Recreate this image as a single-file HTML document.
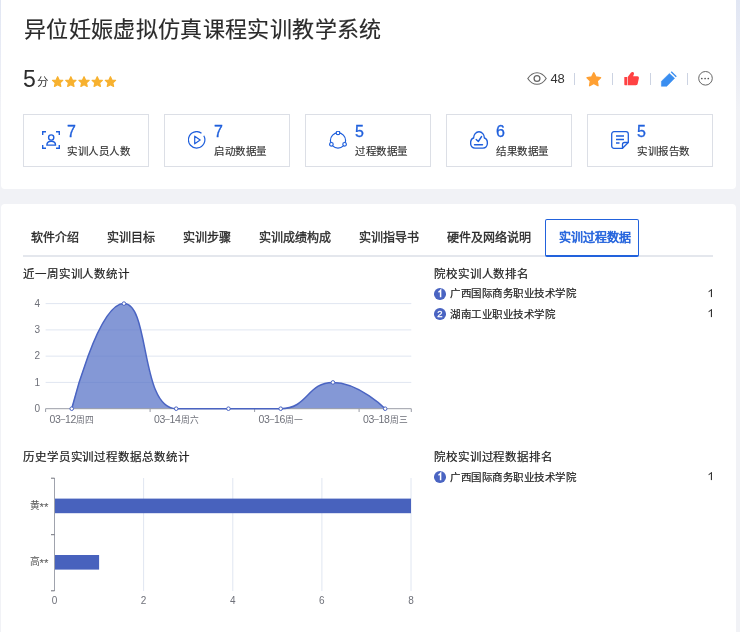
<!DOCTYPE html>
<html lang="zh-CN">
<head>
<meta charset="utf-8">
<style>
*{box-sizing:border-box;margin:0;padding:0}
html,body{width:740px;height:632px;overflow:hidden}
body{background:linear-gradient(#e1e6f3 0px,#e8ebf5 50px,#f1f2f6 110px) #f1f2f6 no-repeat;position:relative;font-family:"Liberation Sans",sans-serif;color:#333}
.a{position:absolute;white-space:nowrap;line-height:1}
.card{position:absolute;background:#fff;border-radius:4px}
.box{position:absolute;top:114px;width:126px;height:53px;border:1px solid #dcdfe6}
.num{position:absolute;font-size:16px;color:#1f5fdc;-webkit-text-stroke:0.3px #1f5fdc;line-height:1}
.lbl{position:absolute;font-size:10.5px;letter-spacing:0.5px;color:#333;-webkit-text-stroke:0.15px #333;line-height:1}
.tab{position:absolute;font-size:12px;color:#333;-webkit-text-stroke:0.35px #2a2a2a;color:#2a2a2a;line-height:1;top:232px}
.sep{position:absolute;top:73px;width:1px;height:12px;background:#ccd3e2}
.rk{position:absolute;font-size:10.5px;letter-spacing:0.5px;color:#222;-webkit-text-stroke:0.2px #222;line-height:1}
.badge{position:absolute;width:11.7px;height:11.7px;border-radius:50%;background:#4a64c2;color:#fff;font-size:9.5px;text-align:center;line-height:11.7px;-webkit-text-stroke:0.3px #fff}
.val{position:absolute;font-size:10.5px;color:#222;line-height:1;right:27px}
.ctitle{position:absolute;font-size:11.5px;color:#222;-webkit-text-stroke:0.2px #222;letter-spacing:0.9px;line-height:1}
</style>
</head>
<body>
<div id="w" style="position:absolute;left:0;top:0;width:740px;height:632px;will-change:transform">
<div class="card" style="left:1px;top:-10px;width:735px;height:199px"></div>
<div class="card" style="left:1px;top:204px;width:735px;height:440px"></div>

<div class="a" style="left:24px;top:19px;font-size:22px;letter-spacing:0.35px;color:#2b2b2b;-webkit-text-stroke:0.15px #2b2b2b">异位妊娠虚拟仿真课程实训教学系统</div>

<div class="a" style="left:23px;top:67.5px;font-size:23px;color:#2b2b2b">5</div>
<div class="a" style="left:37px;top:76.5px;font-size:11.5px;color:#333">分</div>
<svg class="a" style="left:51px;top:75px" width="68" height="14" viewBox="0 0 68 14">
  <g fill="#f7b12f" stroke="#f7b12f" stroke-width="1.2" stroke-linejoin="round">
    <path id="st" d="M6.64,1.70 L8.14,5.04 L11.78,5.43 L9.07,7.89 L9.81,11.47 L6.64,9.65 L3.47,11.47 L4.21,7.89 L1.50,5.43 L5.14,5.04 Z"/>
    <use href="#st" x="13.2"/><use href="#st" x="26.4"/><use href="#st" x="39.6"/><use href="#st" x="52.8"/>
  </g>
</svg>

<!-- top right actions -->
<svg class="a" style="left:526px;top:71px" width="22" height="15" viewBox="0 0 22 15">
  <path d="M1.8,7.5 C4.5,3.3 7.6,1.7 11,1.7 C14.4,1.7 17.5,3.3 20.2,7.5 C17.5,11.7 14.4,13.3 11,13.3 C7.6,13.3 4.5,11.7 1.8,7.5 Z" fill="none" stroke="#666" stroke-width="1.1"/>
  <circle cx="11" cy="7.5" r="2.9" fill="none" stroke="#666" stroke-width="1.3"/>
</svg>
<div class="a" style="left:550.6px;top:72px;font-size:13px;letter-spacing:-0.4px;color:#333">48</div>
<div class="sep" style="left:574px"></div>
<svg class="a" style="left:585px;top:70.5px" width="18" height="17" viewBox="0 0 18 17">
  <path d="M8.80,1.90 L10.86,6.07 L15.46,6.74 L12.13,9.98 L12.91,14.56 L8.80,12.40 L4.69,14.56 L5.47,9.98 L2.14,6.74 L6.74,6.07 Z" fill="#ffa033" stroke="#ffa033" stroke-width="1.6" stroke-linejoin="round"/>
</svg>
<div class="sep" style="left:612px"></div>
<svg class="a" style="left:624px;top:71px" width="16" height="16" viewBox="0 0 16 16">
  <path d="M0.3,6 H3.1 V14.2 H1.3 C0.7,14.2 0.3,13.8 0.3,13.2 Z" fill="#ff4243"/>
  <path d="M3.7,6 L6.9,1.8 C7.4,1.0 8.3,0.7 9.1,1.1 C9.9,1.5 10.2,2.4 9.9,3.2 L9.1,5.3 H13.4 C14.5,5.3 15.1,6.2 14.9,7.3 L13.6,13 C13.4,13.8 12.7,14.2 11.9,14.2 H3.7 Z" fill="#ff4243"/>
</svg>
<div class="sep" style="left:650px"></div>
<svg class="a" style="left:660px;top:71px" width="18" height="17" viewBox="0 0 18 17">
  <path d="M9.4,2.4 L14.6,7.3 L6.8,15.3 L1.4,15.3 L1.4,10.3 Z" fill="#3a8ef0" stroke="#3a8ef0" stroke-width="0.5" stroke-linejoin="round"/>
  <path d="M11.2,0.7 L16.3,5.8" stroke="#3a8ef0" stroke-width="1.3"/>
</svg>
<div class="sep" style="left:687px"></div>
<svg class="a" style="left:697px;top:70px" width="17" height="17" viewBox="0 0 17 17">
  <circle cx="8.5" cy="8.3" r="6.8" fill="none" stroke="#666" stroke-width="1"/>
  <circle cx="4.8" cy="8.5" r="0.85" fill="#555"/><circle cx="8.1" cy="8.5" r="0.85" fill="#555"/><circle cx="11.3" cy="8.5" r="0.85" fill="#555"/>
</svg>

<!-- stat boxes -->
<div class="box" style="left:23px"></div>
<div class="box" style="left:164px"></div>
<div class="box" style="left:305px"></div>
<div class="box" style="left:446px"></div>
<div class="box" style="left:587px"></div>

<svg class="a" style="left:42px;top:131px" width="18" height="18" viewBox="0 0 18 18" fill="none" stroke="#1f5fdc" stroke-width="1.4">
  <path d="M0.7,4 V0.7 H4 M14,0.7 H17.3 V4 M17.3,14 V17.3 H14 M4,17.3 H0.7 V14"/>
  <circle cx="9.2" cy="6.5" r="2.6"/>
  <path d="M4.9,14.1 C4.9,11.5 6.7,10.2 9.2,10.2 C11.7,10.2 13.5,11.5 13.5,14.1 Z"/>
</svg>
<div class="num" style="left:67px;top:124px">7</div>
<div class="lbl" style="left:67px;top:146.4px">实训人员人数</div>

<svg class="a" style="left:188px;top:131px" width="18" height="18" viewBox="0 0 18 18" fill="none" stroke="#1f5fdc" stroke-width="1.2">
  <path d="M13.5,2.2 A8.2,8.2 0 1 0 15.8,4.8"/>
  <path d="M6.7,5.2 L12.2,9 L6.7,12.8 Z" stroke-linejoin="round"/>
</svg>
<div class="num" style="left:214px;top:124px">7</div>
<div class="lbl" style="left:214px;top:146.4px">启动数据量</div>

<svg class="a" style="left:329px;top:131px" width="18" height="18" viewBox="0 0 18 18" fill="none" stroke="#1f5fdc" stroke-width="1.2">
  <circle cx="9" cy="9.5" r="7.6"/>
  <g fill="#fff"><circle cx="9" cy="1.9" r="1.8"/><circle cx="2.4" cy="13.3" r="1.8"/><circle cx="15.6" cy="13.3" r="1.8"/></g>
</svg>
<div class="num" style="left:355px;top:124px">5</div>
<div class="lbl" style="left:355px;top:146.4px">过程数据量</div>

<svg class="a" style="left:470px;top:131px" width="19" height="18" viewBox="0 0 19 18" fill="none" stroke="#1f5fdc" stroke-width="1.4" stroke-linecap="round" stroke-linejoin="round">
  <path d="M3.6,7 C3.6,3.5 6,0.8 9,0.8 C12,0.8 14.4,3.5 14.4,7 C16.3,7.5 17.4,9.5 17.4,12 C17.4,15 15.5,17.1 13,17.1 H5 C2.5,17.1 0.6,15 0.6,12 C0.6,9.5 1.7,7.5 3.6,7 Z"/>
  <path d="M6.2,8.4 L8.3,10.5 L11.6,5.5"/>
  <path d="M4.5,13.7 H12.5"/>
</svg>
<div class="num" style="left:496px;top:124px">6</div>
<div class="lbl" style="left:496px;top:146.4px">结果数据量</div>

<svg class="a" style="left:611px;top:131px" width="18" height="18" viewBox="0 0 18 18" fill="none" stroke="#1f5fdc" stroke-width="1.3">
  <path d="M11.5,17.3 H3 C1.7,17.3 0.7,16.3 0.7,15 V3 C0.7,1.7 1.7,0.7 3,0.7 H15 C16.3,0.7 17.3,1.7 17.3,3 V11.5 Z"/>
  <path d="M11.5,17.3 V13.5 C11.5,12.3 12.3,11.5 13.5,11.5 H17.3"/>
  <path d="M5,5 H13 M5,8.5 H13 M5,12 H8.5"/>
</svg>
<div class="num" style="left:637px;top:124px">5</div>
<div class="lbl" style="left:637px;top:146.4px">实训报告数</div>

<!-- tabs -->
<div style="position:absolute;left:23px;top:255px;width:690px;height:2px;background:#e4e7ed"></div>
<div class="tab" style="left:31px">软件介绍</div>
<div class="tab" style="left:107px">实训目标</div>
<div class="tab" style="left:183px">实训步骤</div>
<div class="tab" style="left:259px">实训成绩构成</div>
<div class="tab" style="left:359px">实训指导书</div>
<div class="tab" style="left:447px">硬件及网络说明</div>
<div style="position:absolute;left:545.2px;top:219px;width:93.6px;height:37.5px;border:1.7px solid #2262dc;border-bottom-width:2.4px;border-radius:2px;background:#fff"></div>
<div class="tab" style="left:559px;color:#2262dc;-webkit-text-stroke:0.6px #2262dc">实训过程数据</div>

<!-- chart titles -->
<div class="ctitle" style="left:23px;top:269.2px">近一周实训人数统计</div>
<div class="ctitle" style="left:23px;top:451.5px">历史学员实训过程数据总数统计</div>
<div class="ctitle" style="left:434px;top:269.2px">院校实训人数排名</div>
<div class="ctitle" style="left:434px;top:451.5px">院校实训过程数据排名</div>

<!-- rankings -->
<div class="badge" style="left:434px;top:288px"></div><svg class="a" style="left:434px;top:288px" width="12" height="12" viewBox="0 0 12 12"><path d="M4.4,4 C5.4,3.7 6.1,3.1 6.6,2.4 V9.3" fill="none" stroke="#fff" stroke-width="1.5"/></svg>
<div class="rk" style="left:450px;top:288px">广西国际商务职业技术学院</div>
<svg class="a" style="left:707px;top:289px" width="7" height="10" viewBox="0 0 7 10"><path d="M1.6,2.6 C2.8,2.2 3.8,1.5 4.4,0.4 V8.1" fill="none" stroke="#1a1a1a" stroke-width="1"/></svg>
<div class="badge" style="left:434px;top:308.2px">2</div>
<div class="rk" style="left:450px;top:309px">湖南工业职业技术学院</div>
<svg class="a" style="left:707px;top:309px" width="7" height="10" viewBox="0 0 7 10"><path d="M1.6,2.6 C2.8,2.2 3.8,1.5 4.4,0.4 V8.1" fill="none" stroke="#1a1a1a" stroke-width="1"/></svg>
<div class="badge" style="left:434px;top:471.3px"></div><svg class="a" style="left:434px;top:471.3px" width="12" height="12" viewBox="0 0 12 12"><path d="M4.4,4 C5.4,3.7 6.1,3.1 6.6,2.4 V9.3" fill="none" stroke="#fff" stroke-width="1.5"/></svg>
<div class="rk" style="left:450px;top:472px">广西国际商务职业技术学院</div>
<svg class="a" style="left:707px;top:472px" width="7" height="10" viewBox="0 0 7 10"><path d="M1.6,2.6 C2.8,2.2 3.8,1.5 4.4,0.4 V8.1" fill="none" stroke="#1a1a1a" stroke-width="1"/></svg>

<!-- line chart -->
<svg class="a" style="left:0;top:0" width="740" height="632" viewBox="0 0 740 632">
  <g stroke="#e0e6f1" stroke-width="1">
    <path d="M45.6,303.6 H411.3 M45.6,329.9 H411.3 M45.6,356.15 H411.3 M45.6,382.4 H411.3"/>
  </g>
  <path d="M71.72,408.70 C71.72,408.70 97.84,303.60 123.96,303.60 C150.09,303.60 140.06,408.70 176.21,408.70 C192.30,408.70 202.33,408.70 228.45,408.70 C254.57,408.70 256.04,408.70 280.69,408.70 C308.29,408.70 306.81,382.43 332.94,382.43 C359.06,382.43 385.18,408.70 385.18,408.70 L385.18,408.70 L71.72,408.70 Z" fill="#5470c6" fill-opacity="0.72"/>
  <path d="M45.6,408.7 H411.3 M45.6,408.7 V412 M150.1,408.7 V412 M254.6,408.7 V412 M359.1,408.7 V412 M411.3,408.7 V412" stroke="#9a9da7" stroke-width="1" fill="none"/>
  <path d="M71.72,408.70 C71.72,408.70 97.84,303.60 123.96,303.60 C150.09,303.60 140.06,408.70 176.21,408.70 C192.30,408.70 202.33,408.70 228.45,408.70 C254.57,408.70 256.04,408.70 280.69,408.70 C308.29,408.70 306.81,382.43 332.94,382.43 C359.06,382.43 385.18,408.70 385.18,408.70" fill="none" stroke="#4a64c2" stroke-width="1.5"/>
  <g fill="#fff" stroke="#4a64c2" stroke-width="1">
    <circle cx="71.72" cy="408.7" r="1.8"/><circle cx="123.96" cy="303.6" r="1.8"/><circle cx="176.21" cy="408.7" r="1.8"/><circle cx="228.45" cy="408.7" r="1.8"/><circle cx="280.69" cy="408.7" r="1.8"/><circle cx="332.94" cy="382.43" r="1.8"/><circle cx="385.18" cy="408.7" r="1.8"/>
  </g>
  <g font-family="Liberation Sans, sans-serif" font-size="9.75" fill="#6e7079">
    <text x="40" y="306.8" text-anchor="end" font-size="10">4</text>
    <text x="40" y="333.1" text-anchor="end" font-size="10">3</text>
    <text x="40" y="359.3" text-anchor="end" font-size="10">2</text>
    <text x="40" y="385.6" text-anchor="end" font-size="10">1</text>
    <text x="40" y="411.9" text-anchor="end" font-size="10">0</text>
    <text x="71.7" y="422.6" text-anchor="middle" font-size="10.5" letter-spacing="-0.3">03<tspan font-size="8.5" dy="-0.9">–</tspan><tspan dy="0.9">12</tspan><tspan font-size="8.75" letter-spacing="0">周四</tspan></text>
    <text x="176.2" y="422.6" text-anchor="middle" font-size="10.5" letter-spacing="-0.3">03<tspan font-size="8.5" dy="-0.9">–</tspan><tspan dy="0.9">14</tspan><tspan font-size="8.75" letter-spacing="0">周六</tspan></text>
    <text x="280.7" y="422.6" text-anchor="middle" font-size="10.5" letter-spacing="-0.3">03<tspan font-size="8.5" dy="-0.9">–</tspan><tspan dy="0.9">16</tspan><tspan font-size="8.75" letter-spacing="0">周一</tspan></text>
    <text x="385.2" y="422.6" text-anchor="middle" font-size="10.5" letter-spacing="-0.3">03<tspan font-size="8.5" dy="-0.9">–</tspan><tspan dy="0.9">18</tspan><tspan font-size="8.75" letter-spacing="0">周三</tspan></text>
  </g>
  <!-- bar chart -->
  <g stroke="#e0e6f1" stroke-width="1">
    <path d="M143.6,478 V591 M232.8,478 V591 M321.9,478 V591 M411,478 V591"/>
  </g>
  <rect x="54.5" y="498.6" width="356.5" height="14.6" fill="#4862bd"/>
  <rect x="54.5" y="555" width="44.6" height="14.6" fill="#4862bd"/>
  <path d="M54.5,478 V591" stroke="#a0a3ad" stroke-width="1" fill="none"/><path d="M51,478.2 H54.5 M51,534.7 H54.5 M51,590.8 H54.5" stroke="#6e7079" stroke-width="1" fill="none"/>
  <g font-family="Liberation Sans, sans-serif" font-size="9.75" fill="#6e7079">
    <text x="48.5" y="508.9" text-anchor="end" font-size="9.75" fill="#555">黄<tspan font-size="11.5" dy="2.1">**</tspan></text>
    <text x="48.5" y="565.2" text-anchor="end" font-size="9.75" fill="#555">高<tspan font-size="11.5" dy="2.1">**</tspan></text>
    <text x="54.5" y="604" text-anchor="middle" font-size="10">0</text>
    <text x="143.6" y="604" text-anchor="middle" font-size="10">2</text>
    <text x="232.8" y="604" text-anchor="middle" font-size="10">4</text>
    <text x="321.9" y="604" text-anchor="middle" font-size="10">6</text>
    <text x="411" y="604" text-anchor="middle" font-size="10">8</text>
  </g>
</svg>
</div>
</body>
</html>
